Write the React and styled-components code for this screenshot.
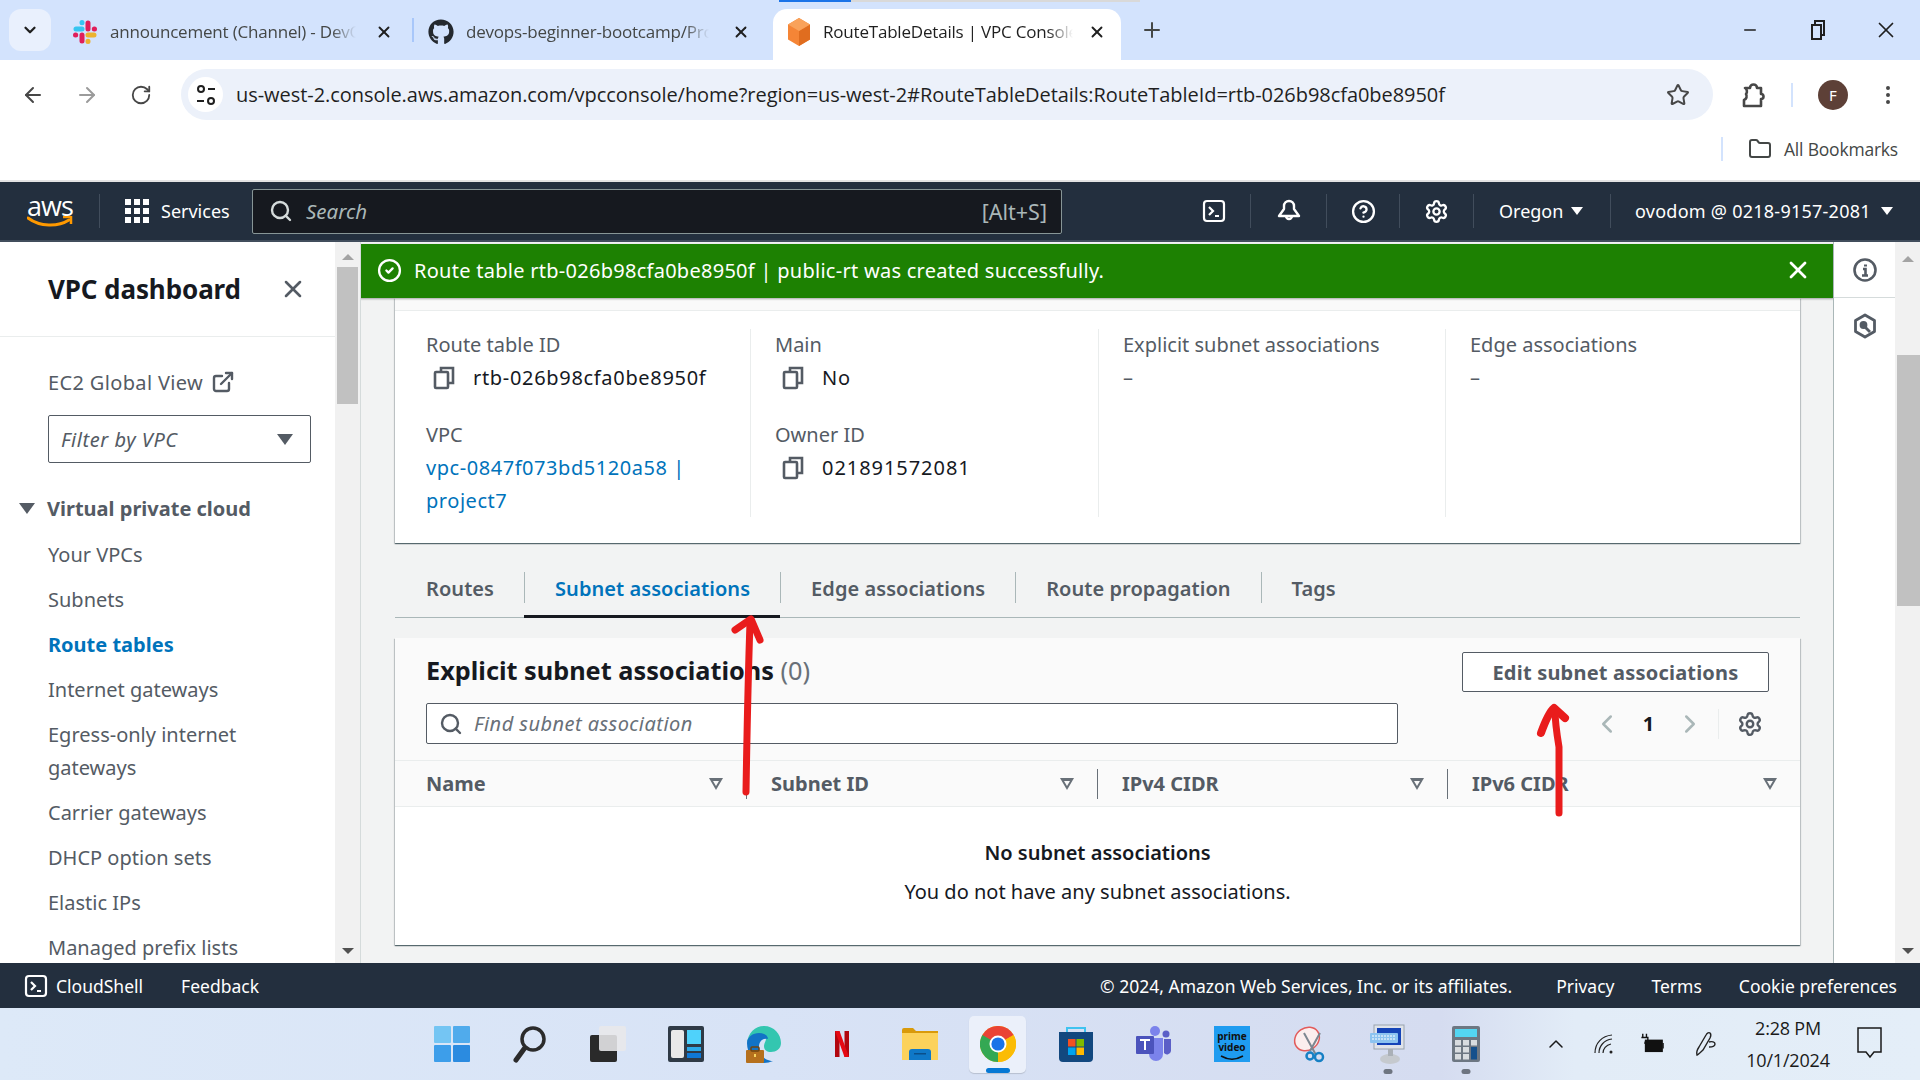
import styled, { createGlobalStyle } from "styled-components";
import {
	ArrowLeft,
	ArrowRight,
	RotateCw,
	Star,
	MoreVertical,
	Folder,
	X,
	Plus,
	Minus,
	ChevronDown,
	ChevronUp,
	ChevronLeft,
	ChevronRight,
	Search,
	CircleHelp,
	Settings,
	CircleCheck,
	ExternalLink,
} from "lucide-react";
import { FaGithub } from "react-icons/fa";

const GlobalStyle = createGlobalStyle`
	html, body {
		margin: 0;
		padding: 0;
		background: #ffffff;
	}
	* {
		box-sizing: border-box;
	}
`;

const UI = `"Noto Sans", "Open Sans", sans-serif`;
const CHROME = `"Open Sans", "Noto Sans", sans-serif`;

const Page = styled.div`
	position: relative;
	display: flex;
	flex-direction: column;
	width: 1920px;
	height: 1080px;
	overflow: hidden;
	font-family: ${UI};
	color: #16191f;
`;

/* browser tab strip */
const TabStrip = styled.div`
	position: relative;
	display: flex;
	align-items: flex-end;
	height: 60px;
	background: #d3e3fd;
	padding-left: 9px;
`;

const LoadBar = styled.div`
	position: absolute;
	top: 0;
	left: 779px;
	width: 361px;
	height: 2px;
	background: linear-gradient(90deg, #1a73e8 20%, #d9d9d9 20%);
`;

const TabListButton = styled.div`
	display: flex;
	align-items: center;
	justify-content: center;
	width: 42px;
	height: 42px;
	margin-bottom: 9px;
	border-radius: 12px;
	background: #e9f0fd;
	color: #1f1f1f;
`;

const Tab = styled.div`
	position: relative;
	display: flex;
	flex-shrink: 0;
	align-items: center;
	width: ${(p) => p.$width}px;
	height: 51px;
	margin-left: ${(p) => p.$left || 0}px;
	padding: 0 0 6px 14px;
	border-radius: 14px 14px 0 0;
	background: ${(p) => (p.$active ? "#ffffff" : "transparent")};
	color: ${(p) => (p.$active ? "#1f1f1f" : "#444746")};
`;

const TabTitle = styled.span`
	flex: 1;
	min-width: 0;
	margin-left: 12px;
	font-family: ${CHROME};
	font-size: 17px;
	white-space: nowrap;
	overflow: hidden;
	letter-spacing: -0.2px;
	-webkit-mask-image: linear-gradient(90deg, #000 90%, transparent 100%);
	mask-image: linear-gradient(90deg, #000 90%, transparent 100%);
`;

const TabClose = styled.span`
	display: flex;
	justify-content: center;
	flex-shrink: 0;
	width: ${(p) => p.$width}px;
	color: #1f1f1f;
`;

const TabDivider = styled.div`
	flex-shrink: 0;
	width: 2px;
	height: 24px;
	margin: 0 0 18px 0;
	background: #a8c7fa;
`;

const NewTab = styled.div`
	display: flex;
	margin: 0 0 18px 19px;
	color: #444746;
`;

const WindowControls = styled.div`
	display: flex;
	align-items: center;
	margin-left: auto;
	height: 60px;
	color: #1f1f1f;
`;

const WindowButton = styled.span`
	display: flex;
	justify-content: center;
	width: 68px;
`;

/* browser toolbar */
const Toolbar = styled.div`
	display: flex;
	align-items: center;
	height: 60px;
	padding: 9px 0 0 0;
	background: #ffffff;
	color: #474747;
`;

const ToolButton = styled.span`
	display: flex;
	justify-content: center;
	flex-shrink: 0;
	width: ${(p) => p.$width || 54}px;
	color: ${(p) => p.$color || "inherit"};
`;

const Omnibox = styled.div`
	display: flex;
	align-items: center;
	flex-shrink: 0;
	width: 1532px;
	height: 51px;
	margin: 0 14px 0 7px;
	padding-left: 7px;
	border-radius: 26px;
	background: #ecf1fa;
`;

const SiteInfo = styled.span`
	display: flex;
	align-items: center;
	justify-content: center;
	width: 35px;
	height: 35px;
	border-radius: 50%;
	background: #ffffff;
	color: #1f1f1f;
`;

const Url = styled.span`
	flex: 1;
	margin-left: 13px;
	font-family: ${CHROME};
	font-size: 20px;
	letter-spacing: -0.05px;
	color: #1f1f1f;
	white-space: nowrap;
`;

const ToolDivider = styled.div`
	flex-shrink: 0;
	width: 2px;
	height: 24px;
	margin-left: ${(p) => p.$left || 0}px;
	background: #d3e3fd;
`;

const Avatar = styled.span`
	display: flex;
	align-items: center;
	justify-content: center;
	flex-shrink: 0;
	width: 30px;
	height: 30px;
	margin: 0 15px 0 25px;
	border-radius: 50%;
	background: #5d4037;
	color: #ffffff;
	font-size: 15px;
`;

const BookmarkBar = styled.div`
	display: flex;
	align-items: center;
	justify-content: flex-end;
	height: 62px;
	padding: 0 22px 2px 0;
	background: #ffffff;
	border-bottom: 2px solid #e3e3e3;
	font-family: ${CHROME};
	font-size: 17.5px;
	color: #444746;
	letter-spacing: -0.2px;
`;

const BookmarkFolder = styled.span`
	display: flex;
	margin: 0 12px 0 25px;
	color: #444746;
`;

/* aws top nav */
const AwsNav = styled.div`
	display: flex;
	flex-shrink: 0;
	align-items: center;
	height: 60px;
	padding: 0 0 0 27px;
	background: #232f3e;
	border-bottom: 2px solid #414d5c;
	color: #ffffff;
	font-size: 18px;
`;

const AwsLogo = styled.div`
	position: relative;
	display: flex;
	flex-direction: column;
	align-items: center;
	width: 46px;
	line-height: 1;
`;

const AwsWord = styled.span`
	font-family: "Open Sans", sans-serif;
	font-size: 27px;
	font-weight: 500;
	letter-spacing: -1px;
	line-height: 21px;
`;

const NavSep = styled.div`
	width: 1px;
	height: 34px;
	margin: 0 ${(p) => p.$right || 0}px 0 ${(p) => p.$left || 0}px;
	background: #414d5c;
`;

const Services = styled.div`
	display: flex;
	align-items: center;
	gap: 12px;
	width: 127px;
`;

const GridDots = styled.div`
	display: grid;
	grid-template-columns: repeat(3, 6px);
	gap: 3px;
	& > i {
		width: 6px;
		height: 6px;
		background: #ffffff;
	}
`;

const AwsSearch = styled.div`
	display: flex;
	align-items: center;
	width: 810px;
	height: 45px;
	padding: 0 14px 0 16px;
	background: #16191f;
	border: 1px solid #879596;
	border-radius: 2px;
	color: #d5dbdb;
`;

const AwsSearchText = styled.span`
	flex: 1;
	margin-left: 13px;
	font-style: italic;
	color: #aab7b8;
	font-size: 20.5px;
`;

const AwsShortcut = styled.span`
	color: #aab7b8;
	font-size: 21.5px;
`;

const NavCell = styled.div`
	display: flex;
	align-items: center;
	justify-content: ${(p) => (p.$start ? "flex-start" : "center")};
	gap: ${(p) => p.$gap || 0}px;
	width: ${(p) => p.$width}px;
	height: 34px;
	margin-left: ${(p) => p.$left || 0}px;
	padding-left: ${(p) => p.$pad || 0}px;
	border-left: ${(p) => (p.$noBorder ? "none" : "1px solid #414d5c")};
	letter-spacing: ${(p) => p.$spacing || 0}px;
	white-space: nowrap;
`;

const Caret = styled.span`
	width: 0;
	height: 0;
	border-left: ${(p) => p.$size || 6}px solid transparent;
	border-right: ${(p) => p.$size || 6}px solid transparent;
	border-top: ${(p) => (p.$size || 6) * 1.45}px solid ${(p) => p.$color || "#ffffff"};
`;

/* console body */
const Body = styled.div`
	display: flex;
	flex: 1;
	min-height: 0;
`;

const Sidebar = styled.div`
	width: 335px;
	background: #ffffff;
	overflow: hidden;
	flex-shrink: 0;
`;

const SideHeader = styled.div`
	display: flex;
	align-items: center;
	justify-content: space-between;
	height: 95px;
	padding: 0 28px 0 48px;
	border-bottom: 1px solid #eaeded;
	color: #545b64;
`;

const SideTitle = styled.h2`
	margin: 0;
	font-size: 26px;
	font-weight: 700;
	color: #16191f;
	letter-spacing: -0.1px;
`;

const SideNav = styled.div`
	padding: 28px 24px 0 48px;
	font-size: 20px;
	color: #545b64;
`;

const GlobalView = styled.div`
	display: flex;
	align-items: center;
	gap: 8px;
	height: 34px;
	letter-spacing: 0.35px;
`;

const FilterSelect = styled.div`
	display: flex;
	align-items: center;
	justify-content: space-between;
	width: 263px;
	height: 48px;
	margin-top: 16px;
	padding: 0 17px 0 12px;
	background: #ffffff;
	border: 1px solid #545b64;
	border-radius: 2px;
	font-style: italic;
	letter-spacing: 0.55px;
`;

const NavSection = styled.div`
	display: flex;
	align-items: center;
	gap: 12px;
	height: 34px;
	margin: 28px 0 13px -36px;
	padding-left: 7px;
	font-weight: 700;
`;

const NavItem = styled.div`
	padding: 0;
	margin-bottom: 12px;
	line-height: 33px;
	color: ${(p) => (p.$active ? "#0073bb" : "#545b64")};
	font-weight: ${(p) => (p.$active ? 700 : 400)};
`;

const ScrollTrack = styled.div`
	display: flex;
	flex-direction: column;
	align-items: center;
	justify-content: space-between;
	flex-shrink: 0;
	width: 25px;
	padding: ${(p) => p.$pad}px 0 9px;
	background: #f1f1f1;
`;

const ScrollThumb = styled.div`
	width: ${(p) => p.$width || 21}px;
	height: ${(p) => p.$height}px;
	margin: ${(p) => p.$top}px 0 0 ${(p) => p.$left || 0}px;
	background: #c1c1c1;
	flex-shrink: 0;
`;

const ScrollArrow = styled.span`
	width: 0;
	height: 0;
	border-left: 6px solid transparent;
	border-right: 6px solid transparent;
	${(p) =>
		p.$up
			? "border-bottom: 6px solid #a3a3a3;"
			: "border-top: 6px solid #505050;"}
`;

const ScrollTop = styled.div`
	display: flex;
	flex-direction: column;
	align-items: center;
	height: 100%;
`;

const Main = styled.div`
	flex: 1;
	min-width: 0;
	padding: 2px 33px 0 34px;
	background: #f2f3f3;
	border-left: 1px solid #d5dbdb;
	border-right: 1px solid #aab7b8;
	overflow: hidden;
`;

const Flash = styled.div`
	display: flex;
	align-items: center;
	height: 54px;
	margin: 0 -34px 0 -35px;
	padding: 0 22px 2px 17px;
	background: #1d8102;
	color: #ffffff;
	font-size: 20px;
	letter-spacing: 0.27px;
	box-shadow: 0 1px 2px rgba(0, 0, 0, 0.35);
	position: relative;
`;

const FlashText = styled.span`
	flex: 1;
	margin-left: 12px;
`;

const OverviewCard = styled.div`
	background: #ffffff;
	box-shadow: 0 1px 1px 0 rgba(0, 28, 36, 0.5), 1px 1px 1px 0 rgba(0, 28, 36, 0.15),
		-1px 1px 1px 0 rgba(0, 28, 36, 0.15);
`;

const CardStrip = styled.div`
	height: 13px;
	background: #fafafa;
	border-bottom: 1px solid #eaeded;
`;

const Overview = styled.div`
	display: grid;
	grid-template-columns: 355px 348px 347px 1fr;
	padding: 18px 0 26px;
	font-size: 20px;
`;

const OverviewCol = styled.div`
	display: flex;
	flex-direction: column;
	height: 188px;
	margin-top: 0;
	padding-left: ${(p) => (p.$first ? 31 : 24)}px;
	border-left: ${(p) => (p.$first ? "none" : "1px solid #eaeded")};
`;

const Field = styled.div`
	margin-bottom: 24px;
	line-height: 31px;
`;

const FieldLabel = styled.div`
	color: #545b64;
	height: 33px;
`;

const FieldValue = styled.div`
	display: flex;
	align-items: center;
	height: 31px;
	margin-bottom: 2px;
	gap: 18px;
	padding-left: 7px;
	color: #16191f;
	letter-spacing: ${(p) => p.$spacing || 0.68}px;
`;

const DashValue = styled.div`
	height: 33px;
	color: #545b64;
`;

const FieldLink = styled.div`
	width: 280px;
	margin-top: -1px;
	line-height: 33px;
	color: #0073bb;
	letter-spacing: 0.55px;
`;

const Tabs = styled.div`
	display: flex;
	height: 46px;
	margin-top: 29px;
	padding-left: 1px;
	border-bottom: 1px solid #aab7b8;
	font-size: 20px;
	font-weight: 600;
	letter-spacing: 0.06px;
`;

const TabLabel = styled.div`
	height: 46px;
	padding-bottom: 14px;
	border-bottom: 3px solid ${(p) => (p.$active ? "#16191f" : "transparent")};
	margin-bottom: -1px;
	color: ${(p) => (p.$active ? "#0073bb" : "#545b64")};
`;

const TabInner = styled.div`
	height: 31px;
	padding: 0 30px;
	line-height: 33px;
	border-left: ${(p) => (p.$first ? "none" : "1px solid #aab7b8")};
`;

const TableCard = styled.div`
	margin-top: 20px;
	background: #ffffff;
	box-shadow: 0 1px 1px 0 rgba(0, 28, 36, 0.5), 1px 1px 1px 0 rgba(0, 28, 36, 0.15),
		-1px 1px 1px 0 rgba(0, 28, 36, 0.15);
`;

const TableHead = styled.div`
	display: flex;
	flex-direction: column;
	height: 169px;
	background: #fafafa;
`;

const TableTop = styled.div`
	display: flex;
	align-items: flex-start;
	justify-content: space-between;
	height: 66px;
	padding: 15px 31px 0 31px;
`;

const TableTitle = styled.h3`
	margin: -1px 0 0;
	font-size: 25.3px;
	line-height: 36px;
	font-weight: 700;
	color: #16191f;
`;

const Count = styled.span`
	font-weight: 400;
	color: #687078;
`;

const OutlineButton = styled.div`
	display: flex;
	align-items: center;
	justify-content: center;
	width: 307px;
	height: 40px;
	margin-top: -1px;
	background: #ffffff;
	border: 1px solid #545b64;
	border-radius: 2px;
	font-size: 20px;
	font-weight: 700;
	letter-spacing: 0.2px;
	color: #545b64;
`;

const TableTools = styled.div`
	display: flex;
	align-items: center;
	height: 41px;
	padding-left: 31px;
`;

const FindInput = styled.div`
	display: flex;
	align-items: center;
	gap: 11px;
	width: 972px;
	height: 41px;
	padding-left: 12px;
	background: #ffffff;
	border: 1px solid #545b64;
	border-radius: 2px;
	font-size: 20px;
	font-style: italic;
	letter-spacing: 0.45px;
	color: #687078;
`;

const Pager = styled.div`
	display: flex;
	align-items: center;
	margin-left: 194px;
	color: #aab7b8;
`;

const PageNumber = styled.span`
	width: 53px;
	text-align: center;
	font-size: 20px;
	font-weight: 700;
	color: #16191f;
`;

const PagerGear = styled.span`
	display: flex;
	height: 30px;
	align-items: center;
	margin-left: 13px;
	padding-left: 18px;
	border-left: 1px solid #eaeded;
	color: #545b64;
`;

const ColumnRow = styled.div`
	display: grid;
	grid-template-columns: 351px 351px 350px 1fr;
	height: 47px;
	margin-top: 16px;
	border-top: 1px solid #eaeded;
	border-bottom: 1px solid #eaeded;
	align-items: center;
	font-size: 20px;
	font-weight: 700;
	color: #545b64;
`;

const Column = styled.div`
	display: flex;
	align-items: center;
	justify-content: space-between;
	height: 30px;
	padding: 0 23px 0 ${(p) => (p.$first ? 31 : 24)}px;
	border-left: ${(p) => (p.$first ? "none" : "1px solid #687078")};
`;

const SortMark = styled.span`
	width: 0;
	height: 0;
	border-left: 7px solid transparent;
	border-right: 7px solid transparent;
	border-top: 12px solid #687078;
	position: relative;
	&::after {
		content: "";
		position: absolute;
		left: -3px;
		top: -9px;
		border-left: 3px solid transparent;
		border-right: 3px solid transparent;
		border-top: 5px solid #fafafa;
	}
`;

const EmptyState = styled.div`
	display: flex;
	flex-direction: column;
	align-items: center;
	height: 138px;
	padding-top: 29px;
	font-size: 20px;
	line-height: 33px;
	color: #16191f;
`;

const EmptyTitle = styled.div`
	font-weight: 600;
	margin-bottom: 6px;
`;

const RightRail = styled.div`
	flex-shrink: 0;
	width: 61px;
	background: #ffffff;
	color: #545b64;
`;

const RailSlot = styled.div`
	display: flex;
	align-items: center;
	justify-content: center;
	height: ${(p) => p.$height}px;
	border-bottom: ${(p) => (p.$line ? "1px solid #d5dbdb" : "none")};
`;

/* aws footer */
const Footer = styled.div`
	display: flex;
	flex-shrink: 0;
	align-items: center;
	height: 45px;
	padding: 0 23px 0 24px;
	background: #232f3e;
	color: #ffffff;
	font-size: 17.5px;
`;

const FooterLink = styled.span`
	margin-left: ${(p) => p.$left || 0}px;
	white-space: nowrap;
`;

const FooterRight = styled.div`
	display: flex;
	margin-left: auto;
`;

/* windows taskbar */
const Taskbar = styled.div`
	display: flex;
	flex-shrink: 0;
	align-items: center;
	height: 72px;
	padding-left: 413px;
	background: linear-gradient(90deg, #dde9f8 0%, #d8e3f6 40%, #d5dcf0 75%, #e2ecf7 82%, #e4eef8 100%);
`;

const AppSlot = styled.div`
	position: relative;
	display: flex;
	flex-shrink: 0;
	align-items: center;
	justify-content: center;
	width: 78px;
	height: 57px;
	&::before {
		content: "";
		position: absolute;
		display: ${(p) => (p.$active ? "block" : "none")};
		left: 10px;
		top: 0;
		width: 57px;
		height: 57px;
		background: #ebf0fa;
		border-radius: 5px;
		box-shadow: 0 1px 1px rgba(0, 0, 0, 0.15);
	}
	&::after {
		content: "";
		position: absolute;
		display: ${(p) => (p.$active || p.$running ? "block" : "none")};
		left: 50%;
		bottom: ${(p) => (p.$active ? 0 : -1)}px;
		width: ${(p) => (p.$active ? 24 : 9)}px;
		height: 5px;
		transform: translateX(-50%);
		border-radius: 3px;
		background: ${(p) => (p.$active ? "#0678d4" : "#6e7580")};
	}
	& > svg {
		position: relative;
		z-index: 1;
	}
`;

const Tray = styled.div`
	display: flex;
	flex-shrink: 0;
	align-items: center;
	margin-left: 39px;
	color: #1a1a1a;
`;

const TrayIcon = styled.span`
	display: flex;
	justify-content: center;
	flex-shrink: 0;
	width: ${(p) => p.$width}px;
`;

const Clock = styled.div`
	display: flex;
	flex-direction: column;
	align-items: center;
	width: 80px;
	font-family: ${CHROME};
	font-size: 18px;
	line-height: 32px;
	letter-spacing: -0.2px;
	white-space: nowrap;
`;

const Notify = styled.span`
	display: flex;
	margin-left: 29px;
`;

const Annotations = styled.svg`
	position: absolute;
	left: 0;
	top: 0;
	width: 1920px;
	height: 1080px;
	pointer-events: none;
`;

/* drawings */
const SlackIcon = () => (
	<svg width="26" height="26" viewBox="0 0 26 26" fill="none" strokeLinecap="round" strokeWidth="5">
		<path d="M10 3.5v.2M4 10h6" stroke="#36c5f0" />
		<path d="M22.5 10h-.2M16 4v6" stroke="#e01e5a" />
		<path d="M16 22.5v-.2M22 16h-6" stroke="#ecb22e" />
		<path d="M3.5 16h.2M10 22v-6" stroke="#e01e5a" />
	</svg>
);

const CubeIcon = () => (
	<svg width="24" height="28" viewBox="0 0 24 28">
		<path d="M12 0l11 6.5v15L12 28 1 21.5v-15z" fill="#f58536" />
		<path d="M12 13l11-6.5v15L12 28z" fill="#e06d1f" />
		<path d="M12 0l11 6.5L12 13 1 6.5z" fill="#f9a25a" />
	</svg>
);

const RestoreIcon = () => (
	<svg width="16" height="22" viewBox="0 0 16 22" fill="none" stroke="#1f1f1f" strokeWidth="2">
		<rect x="2" y="6" width="9" height="14" fill="#d3e3fd" />
		<path d="M5 6V2h9v14h-3" />
	</svg>
);

const TuneIcon = () => (
	<svg width="20" height="24" viewBox="0 0 20 24" fill="none" stroke="#1f1f1f" strokeWidth="2">
		<circle cx="5" cy="6" r="3" />
		<path d="M12 6h7M1 18h7" />
		<circle cx="15" cy="18" r="3" />
	</svg>
);

const ExtensionIcon = () => (
	<svg width="26" height="28" viewBox="0 0 26 28" fill="none" stroke="#474747" strokeWidth="2.6" strokeLinejoin="round">
		<path d="M4 7h5a3.5 3.5 0 017 0h4v6a2.5 2.5 0 010 5v7H3v-6a4 4 0 002-6 4 4 0 00-1-6z" />
	</svg>
);

const ShellIcon = ({ size = 24 }) => (
	<svg width={size} height={size} viewBox="0 0 24 24" fill="none" stroke="#fff" strokeWidth="2.2">
		<rect x="2" y="2" width="20" height="20" rx="3" />
		<path d="M7 8l4 4-4 4M13 17h4" />
	</svg>
);

const BellIcon = () => (
	<svg width="26" height="26" viewBox="0 0 26 26" fill="none" stroke="#fff" strokeWidth="2.4" strokeLinejoin="round">
		<path d="M13 3a5 5 0 00-5 5v3l-5 7h20l-5-7V8a5 5 0 00-5-5z" />
		<path d="M10 18a3 3 0 006 0" />
	</svg>
);

const CopyIcon = () => (
	<svg width="22" height="24" viewBox="0 0 22 24" fill="none" stroke="#545b64" strokeWidth="2.6">
		<path d="M8 6V2h12v15h-5" />
		<rect x="2" y="6" width="13" height="16" rx="1" />
	</svg>
);

const RailInfo = () => (
	<svg width="26" height="26" viewBox="0 0 26 26" fill="none" stroke="#545b64" strokeWidth="2.6">
		<circle cx="13" cy="13" r="10.5" />
		<path d="M11 12h2.5v6M10 18.5h6" />
		<path d="M13.5 7.5v2" strokeWidth="3" />
	</svg>
);

const RailHex = () => (
	<svg width="24" height="26" viewBox="0 0 24 26" fill="none" stroke="#545b64" strokeWidth="2.8" strokeLinejoin="round">
		<path d="M12 2l9.5 5.5v11L12 24l-9.5-5.5v-11z" />
		<circle cx="10.5" cy="12" r="2.5" fill="#545b64" />
		<path d="M12 14l5 5" />
	</svg>
);

const WindowsIcon = () => (
	<svg width="36" height="36" viewBox="0 0 36 36">
		<rect x="0" y="0" width="17" height="17" rx="1" fill="#74c5f3" />
		<rect x="19" y="0" width="17" height="17" rx="1" fill="#50abec" />
		<rect x="0" y="19" width="17" height="17" rx="1" fill="#3d9eea" />
		<rect x="19" y="19" width="17" height="17" rx="1" fill="#2b8be0" />
	</svg>
);

const SearchApp = () => (
	<svg width="34" height="38" viewBox="0 0 34 38" fill="none" stroke="#2b2b2b" strokeLinecap="round">
		<circle cx="20" cy="14" r="11" strokeWidth="3.5" />
		<path d="M11 24L3 35" strokeWidth="5" />
	</svg>
);

const TaskViewIcon = () => (
	<svg width="36" height="36" viewBox="0 0 36 36">
		<rect x="0" y="9" width="27" height="27" rx="2" fill="#2a2a2a" />
		<rect x="9" y="0" width="27" height="25" rx="2" fill="#e8e8ea" opacity="0.88" />
	</svg>
);

const WidgetsIcon = () => (
	<svg width="36" height="36" viewBox="0 0 36 36">
		<rect width="36" height="36" rx="2" fill="#2f3a46" />
		<rect x="3" y="4" width="13" height="28" rx="2" fill="#e9e9e9" />
		<rect x="19" y="4" width="14" height="14" fill="#4fd2fb" />
		<rect x="19" y="21" width="14" height="4" fill="#2ba9e8" />
		<rect x="19" y="27" width="14" height="5" fill="#0f78d6" />
	</svg>
);

const EdgeIcon = () => (
	<svg width="36" height="38" viewBox="0 0 36 38">
		<path d="M18 1c10 0 17 8 17 17 0 6-5 9-10 9-4 0-7-2-7-6 0-3 2-5 2-7 0-3-4-5-8-5C7 9 3 13 1 18 2 8 9 1 18 1z" fill="#33c6b0" />
		<path d="M1 18c0-6 6-10 12-10 6 0 9 3 9 6-5-1-9 2-9 8 0 6 5 14 14 14-3 1-6 2-9 2C8 38 1 29 1 18z" fill="#1273c6" />
		<rect x="0" y="25" width="18" height="13" rx="1" fill="#b5701d" />
		<rect x="5" y="22" width="8" height="4" rx="1" fill="none" stroke="#6e4410" strokeWidth="1.5" />
		<rect x="8" y="29" width="2" height="3" fill="#f6d35c" />
	</svg>
);

const NetflixIcon = () => (
	<svg width="14" height="26" viewBox="0 0 14 26">
		<rect width="4.5" height="26" fill="#b1060f" />
		<rect x="9.5" width="4.5" height="26" fill="#b1060f" />
		<path d="M0 0h4.5L14 26H9.5z" fill="#e50914" />
	</svg>
);

const FilesIcon = () => (
	<svg width="36" height="32" viewBox="0 0 36 32">
		<path d="M0 2a2 2 0 012-2h9l3 3h22v29H0z" fill="#d99a0a" />
		<rect x="0" y="5" width="36" height="27" fill="#fcd25b" />
		<path d="M7 32V24a3 3 0 013-3h16a3 3 0 013 3v8z" fill="#0f78c8" />
		<rect x="12" y="25" width="12" height="1.5" fill="#0a4f8a" />
	</svg>
);

const ChromeIcon = () => (
	<svg width="36" height="36" viewBox="0 0 36 36">
		<circle cx="18" cy="18" r="18" fill="#fbbc05" />
		<path d="M18 18L33.6 9A18 18 0 002.4 9L2.4 27z" fill="#ea4335" />
		<path d="M18 18L2.4 9A18 18 0 0018 36z" fill="#34a853" />
		<path d="M18 18L18 36A18 18 0 0033.6 9z" fill="#fbbc05" />
		<circle cx="18" cy="18" r="8.5" fill="#ffffff" />
		<circle cx="18" cy="18" r="6.6" fill="#1a73e8" />
	</svg>
);

const StoreIcon = () => (
	<svg width="36" height="36" viewBox="0 0 36 36">
		<path d="M9 7V2h18v5" fill="none" stroke="#3fc3f0" strokeWidth="2" />
		<path d="M1 6h34v26a4 4 0 01-4 4H5a4 4 0 01-4-4z" fill="#12487f" />
		<rect x="10" y="13" width="7.5" height="7.5" fill="#f25022" />
		<rect x="18.5" y="13" width="7.5" height="7.5" fill="#7fba00" />
		<rect x="10" y="21.5" width="7.5" height="7.5" fill="#00a4ef" />
		<rect x="18.5" y="21.5" width="7.5" height="7.5" fill="#ffb900" />
	</svg>
);

const TeamsIcon = () => (
	<svg width="36" height="36" viewBox="0 0 36 36">
		<circle cx="19" cy="5" r="5" fill="#7b83eb" />
		<circle cx="30" cy="8" r="3.5" fill="#5b5fc7" />
		<path d="M13 12h14v16a7 7 0 01-14 0z" fill="#7b83eb" />
		<path d="M28 13h7v12a4 4 0 01-7 2z" fill="#5b5fc7" />
		<rect x="0" y="10" width="18" height="18" rx="1" fill="#4b53bc" />
		<path d="M4 14h10M9 14v10" stroke="#ffffff" strokeWidth="2" />
	</svg>
);

const PrimeIcon = () => (
	<svg width="36" height="36" viewBox="0 0 36 36">
		<rect width="36" height="36" fill="#1f9cf0" />
		<path d="M7 30c7 4 15 4 22 0" fill="none" stroke="#111" strokeWidth="1.5" />
		<text x="18" y="14" textAnchor="middle" fontSize="10" fontWeight="700" fontFamily="Noto Sans" fill="#111">prime</text>
		<text x="18" y="25" textAnchor="middle" fontSize="10" fontWeight="700" fontFamily="Noto Sans" fill="#111">video</text>
	</svg>
);

const SnipIcon = () => (
	<svg width="36" height="38" viewBox="0 0 36 38" fill="none">
		<ellipse cx="15" cy="14" rx="13" ry="11" transform="rotate(-35 15 14)" fill="#fbeeee" stroke="#e25b5b" strokeWidth="1.5" />
		<path d="M12 8l12 22M28 8L18 26" stroke="#7d8791" strokeWidth="2" />
		<circle cx="27" cy="32" r="4" stroke="#1680c4" strokeWidth="2.5" />
		<circle cx="18" cy="31" r="3.5" stroke="#1680c4" strokeWidth="2.5" />
	</svg>
);

const KeyboardIcon = () => (
	<svg width="36" height="40" viewBox="0 0 36 40">
		<rect x="4" y="1" width="30" height="24" fill="#dfe3ea" stroke="#9aa3ad" />
		<rect x="7" y="4" width="24" height="17" fill="#1544b8" />
		<rect x="0" y="9" width="28" height="10" rx="1" fill="#8cc3f0" />
		<path d="M2 12h24M2 15h24" stroke="#ffffff" strokeDasharray="2 1" />
		<ellipse cx="20" cy="35" rx="10" ry="5" fill="#c5c9ce" />
		<rect x="18" y="25" width="5" height="7" fill="#aab0b7" />
	</svg>
);

const CalculatorIcon = () => (
	<svg width="28" height="36" viewBox="0 0 28 36">
		<rect width="28" height="36" rx="2" fill="#6d7782" />
		<rect x="3" y="3" width="22" height="8" fill="#53d6f2" />
		{[0, 1, 2].map((r) =>
			[0, 1].map((c) => (
				<rect key={`${r}-${c}`} x={3 + c * 8} y={14 + r * 7} width="6" height="5.5" fill="#d8dcdf" />
			))
		)}
		<rect x="19" y="14" width="6" height="5.5" fill="#d8dcdf" />
		<rect x="19" y="21" width="6" height="12.5" fill="#14508c" />
	</svg>
);

const WifiIcon = () => (
	<svg width="20" height="20" viewBox="0 0 20 20" fill="none" stroke="#222" strokeWidth="1.2">
		<path d="M1 19C1 9 8 2 18 1" />
		<path d="M5 19C5 12 10 6 18 5" />
		<path d="M9 19c0-4 3-8 8-9" />
		<circle cx="17" cy="18" r="1.5" fill="#222" stroke="none" />
	</svg>
);

const BatteryPlug = () => (
	<svg width="26" height="24" viewBox="0 0 26 24" fill="none" stroke="#111" strokeWidth="1.5">
		<path d="M3 1v4M7 1v4M1.5 5h7v3l-3 2v2" />
		<rect x="6" y="8" width="18" height="12" fill="#111" />
		<path d="M25 11v6" />
	</svg>
);

const PenIcon = () => (
	<svg width="22" height="26" viewBox="0 0 22 26" fill="none" stroke="#222" strokeWidth="1.4">
		<path d="M2 24c-1-3 0-5 2-8l7-12c1-2 3-3 4-2s1 3 0 5l-7 12c-2 2-4 4-6 5z" />
		<path d="M14 11c3-1 6 0 6 2s-3 3-6 3" />
	</svg>
);

const NotifyIcon = () => (
	<svg width="26" height="34" viewBox="0 0 26 34" fill="none" stroke="#1a1a1a" strokeWidth="1.5">
		<path d="M1 1h23v24h-7l-4 5-4-5H1z" />
	</svg>
);

const navItems = [
	"Your VPCs",
	"Subnets",
	"Route tables",
	"Internet gateways",
	"Egress-only internet gateways",
	"Carrier gateways",
	"DHCP option sets",
	"Elastic IPs",
	"Managed prefix lists",
];

const tabs = ["Routes", "Subnet associations", "Edge associations", "Route propagation", "Tags"];
const columns = ["Name", "Subnet ID", "IPv4 CIDR", "IPv6 CIDR"];
const apps = [
	WindowsIcon,
	SearchApp,
	TaskViewIcon,
	WidgetsIcon,
	EdgeIcon,
	NetflixIcon,
	FilesIcon,
	ChromeIcon,
	StoreIcon,
	TeamsIcon,
	PrimeIcon,
	SnipIcon,
	KeyboardIcon,
	CalculatorIcon,
];

function App() {
	return (
		<Page>
			<GlobalStyle />
			<TabStrip>
				<LoadBar />
				<TabListButton>
					<ChevronDown size={18} strokeWidth={3} />
				</TabListButton>
				<Tab $width={354} $left={7}>
					<SlackIcon />
					<TabTitle>announcement (Channel) - DevOps</TabTitle>
					<TabClose $width={56}>
						<X size={18} strokeWidth={2.5} />
					</TabClose>
				</Tab>
				<TabDivider />
				<Tab $width={359}>
					<FaGithub size={26} color="#24292f" />
					<TabTitle>devops-beginner-bootcamp/Project</TabTitle>
					<TabClose $width={64}>
						<X size={18} strokeWidth={2.5} />
					</TabClose>
				</Tab>
				<Tab $active $width={348}>
					<CubeIcon />
					<TabTitle>RouteTableDetails | VPC Console</TabTitle>
					<TabClose $width={48}>
						<X size={18} strokeWidth={2.5} />
					</TabClose>
				</Tab>
				<NewTab>
					<Plus size={24} />
				</NewTab>
				<WindowControls>
					<WindowButton>
						<Minus size={18} strokeWidth={2} />
					</WindowButton>
					<WindowButton>
						<RestoreIcon />
					</WindowButton>
					<WindowButton>
						<X size={26} strokeWidth={1.6} />
					</WindowButton>
				</WindowControls>
			</TabStrip>

			<Toolbar>
				<ToolButton $width={66}>
					<ArrowLeft size={24} />
				</ToolButton>
				<ToolButton $width={42} $color="#9b9b9b">
					<ArrowRight size={24} />
				</ToolButton>
				<ToolButton $width={66}>
					<RotateCw size={22} />
				</ToolButton>
				<Omnibox>
					<SiteInfo>
						<TuneIcon />
					</SiteInfo>
					<Url>us-west-2.console.aws.amazon.com/vpcconsole/home?region=us-west-2#RouteTableDetails:RouteTableId=rtb-026b98cfa0be8950f</Url>
					<ToolButton $width={70}>
						<Star size={24} />
					</ToolButton>
				</Omnibox>
				<ToolButton $width={54}>
					<ExtensionIcon />
				</ToolButton>
				<ToolDivider $left={10} />
				<Avatar>F</Avatar>
				<ToolButton $width={50}>
					<MoreVertical size={24} />
				</ToolButton>
			</Toolbar>

			<BookmarkBar>
				<ToolDivider />
				<BookmarkFolder>
					<Folder size={24} />
				</BookmarkFolder>
				All Bookmarks
			</BookmarkBar>

			<AwsNav>
				<AwsLogo>
					<AwsWord>aws</AwsWord>
					<svg width="46" height="12" viewBox="0 0 46 12" fill="none">
						<path d="M1 2c12 9 30 9 41 2" stroke="#ff9900" strokeWidth="3" strokeLinecap="round" />
						<path d="M36 1h8v7" stroke="#ff9900" strokeWidth="2.5" />
					</svg>
				</AwsLogo>
				<NavSep $left={26} $right={25} />
				<Services>
					<GridDots>
						{Array.from({ length: 9 }, (_, i) => (
							<i key={i} />
						))}
					</GridDots>
					Services
				</Services>
				<AwsSearch>
					<Search size={24} strokeWidth={2.4} />
					<AwsSearchText>Search</AwsSearchText>
					<AwsShortcut>[Alt+S]</AwsShortcut>
				</AwsSearch>
				<NavCell $width={72} $left={116} $noBorder>
					<ShellIcon />
				</NavCell>
				<NavCell $width={76}>
					<BellIcon />
				</NavCell>
				<NavCell $width={73}>
					<CircleHelp size={25} strokeWidth={2.2} />
				</NavCell>
				<NavCell $width={74}>
					<Settings size={25} strokeWidth={2.2} />
				</NavCell>
				<NavCell $width={137} $start $pad={25} $gap={8}>
					Oregon <Caret />
				</NavCell>
				<NavCell $width={310} $start $pad={24} $gap={10} $spacing={0.25}>
					ovodom @ 0218-9157-2081 <Caret />
				</NavCell>
			</AwsNav>

			<Body>
				<Sidebar>
					<SideHeader>
						<SideTitle>VPC dashboard</SideTitle>
						<X size={28} strokeWidth={2.2} />
					</SideHeader>
					<SideNav>
						<GlobalView>
							EC2 Global View <ExternalLink size={24} strokeWidth={2.4} />
						</GlobalView>
						<FilterSelect>
							Filter by VPC <Caret $size={8} $color="#545b64" />
						</FilterSelect>
						<NavSection>
							<Caret $size={8} $color="#545b64" />
							Virtual private cloud
						</NavSection>
						{navItems.map((item) => (
							<NavItem key={item} $active={item === "Route tables"}>
								{item}
							</NavItem>
						))}
					</SideNav>
				</Sidebar>
				<ScrollTrack $pad={12}>
					<ScrollTop>
						<ScrollArrow $up />
						<ScrollThumb $height={137} $top={7} />
					</ScrollTop>
					<ScrollArrow />
				</ScrollTrack>

				<Main>
					<Flash>
						<CircleCheck size={25} strokeWidth={2.2} />
						<FlashText>Route table rtb-026b98cfa0be8950f | public-rt was created successfully.</FlashText>
						<X size={28} strokeWidth={2.4} />
					</Flash>
					<OverviewCard>
						<CardStrip />
						<Overview>
							<OverviewCol $first>
								<Field>
									<FieldLabel>Route table ID</FieldLabel>
									<FieldValue>
										<CopyIcon />
										rtb-026b98cfa0be8950f
									</FieldValue>
								</Field>
								<Field>
									<FieldLabel>VPC</FieldLabel>
									<FieldLink>vpc-0847f073bd5120a58 | project7</FieldLink>
								</Field>
							</OverviewCol>
							<OverviewCol>
								<Field>
									<FieldLabel>Main</FieldLabel>
									<FieldValue>
										<CopyIcon />
										No
									</FieldValue>
								</Field>
								<Field>
									<FieldLabel>Owner ID</FieldLabel>
									<FieldValue $spacing={0.95}>
										<CopyIcon />
										021891572081
									</FieldValue>
								</Field>
							</OverviewCol>
							<OverviewCol>
								<Field>
									<FieldLabel>Explicit subnet associations</FieldLabel>
									<DashValue>–</DashValue>
								</Field>
							</OverviewCol>
							<OverviewCol>
								<Field>
									<FieldLabel>Edge associations</FieldLabel>
									<DashValue>–</DashValue>
								</Field>
							</OverviewCol>
						</Overview>
					</OverviewCard>

					<Tabs>
						{tabs.map((tab, i) => (
							<TabLabel key={tab} $active={i === 1}>
								<TabInner $first={i === 0}>{tab}</TabInner>
							</TabLabel>
						))}
					</Tabs>

					<TableCard>
						<TableHead>
							<TableTop>
								<TableTitle>
									Explicit subnet associations <Count>(0)</Count>
								</TableTitle>
								<OutlineButton>Edit subnet associations</OutlineButton>
							</TableTop>
							<TableTools>
								<FindInput>
									<Search size={24} strokeWidth={2.4} color="#545b64" />
									Find subnet association
								</FindInput>
								<Pager>
									<ChevronLeft size={30} strokeWidth={2} />
									<PageNumber>1</PageNumber>
									<ChevronRight size={30} strokeWidth={2} />
									<PagerGear>
										<Settings size={26} strokeWidth={2.2} />
									</PagerGear>
								</Pager>
							</TableTools>
							<ColumnRow>
								{columns.map((col, i) => (
									<Column key={col} $first={i === 0}>
										{col}
										<SortMark />
									</Column>
								))}
							</ColumnRow>
						</TableHead>
						<EmptyState>
							<EmptyTitle>No subnet associations</EmptyTitle>
							You do not have any subnet associations.
						</EmptyState>
					</TableCard>
				</Main>

				<RightRail>
					<RailSlot $height={56} $line>
						<RailInfo />
					</RailSlot>
					<RailSlot $height={56}>
						<RailHex />
					</RailSlot>
				</RightRail>
				<ScrollTrack $pad={14}>
					<ScrollTop>
						<ScrollArrow $up />
						<ScrollThumb $height={251} $top={93} $width={23} $left={2} />
					</ScrollTop>
					<ScrollArrow />
				</ScrollTrack>
			</Body>

			<Footer>
				<ShellIcon />
				<FooterLink $left={8}>CloudShell</FooterLink>
				<FooterLink $left={38}>Feedback</FooterLink>
				<FooterRight>
					<FooterLink>© 2024, Amazon Web Services, Inc. or its affiliates.</FooterLink>
					<FooterLink $left={44}>Privacy</FooterLink>
					<FooterLink $left={37}>Terms</FooterLink>
					<FooterLink $left={37}>Cookie preferences</FooterLink>
				</FooterRight>
			</Footer>

			<Taskbar>
				{apps.map((AppIcon, i) => (
					<AppSlot key={i} $active={i === 7} $running={i >= 12}>
						<AppIcon />
					</AppSlot>
				))}
				<Tray>
					<ChevronUp size={24} strokeWidth={1.5} />
					<TrayIcon $width={72}>
						<WifiIcon />
					</TrayIcon>
					<TrayIcon $width={24}>
						<BatteryPlug />
					</TrayIcon>
					<TrayIcon $width={84}>
						<PenIcon />
					</TrayIcon>
					<Clock>
						<span>2:28 PM</span>
						<span>10/1/2024</span>
					</Clock>
					<Notify>
						<NotifyIcon />
					</Notify>
				</Tray>
			</Taskbar>

			<Annotations viewBox="0 0 1920 1080" fill="none" stroke="#e91c1c" strokeLinecap="round" strokeLinejoin="round">
				<path d="M746 792C747 730 748 680 750 622" strokeWidth="7" />
				<path d="M735 630L751 619L760 640" strokeWidth="7" />
				<path d="M1559 813V747C1557 735 1555 722 1555 710" strokeWidth="7" />
				<path d="M1541 733C1545 722 1549 712 1554 708L1565 718" strokeWidth="8" />
			</Annotations>
		</Page>
	);
}

export default App;
